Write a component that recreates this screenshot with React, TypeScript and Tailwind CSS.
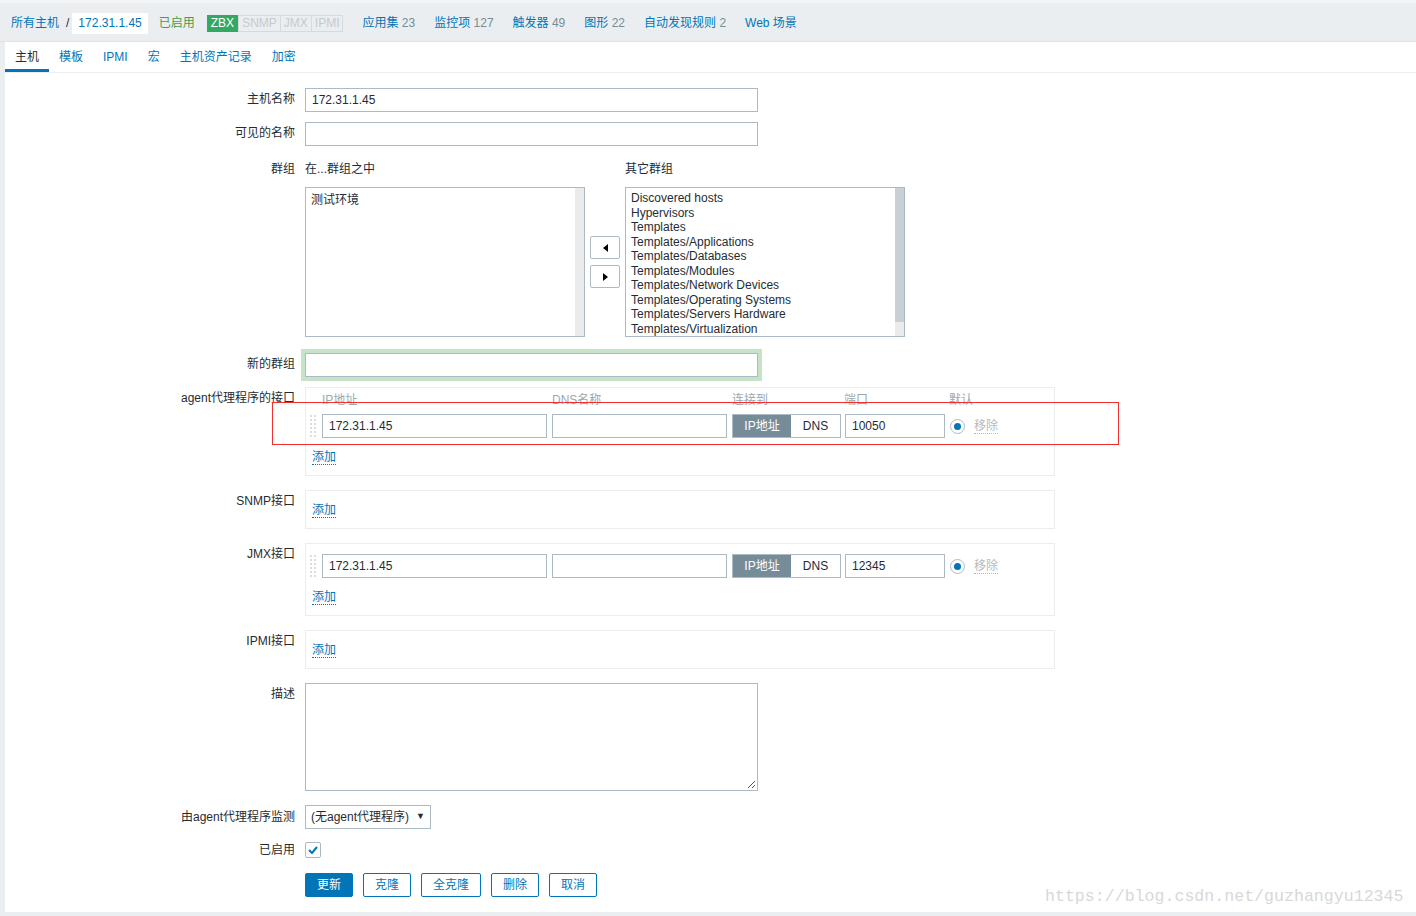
import React from 'react'

const groupsOther = [
  'Discovered hosts',
  'Hypervisors',
  'Templates',
  'Templates/Applications',
  'Templates/Databases',
  'Templates/Modules',
  'Templates/Network Devices',
  'Templates/Operating Systems',
  'Templates/Servers Hardware',
  'Templates/Virtualization',
]

const navItems = [
  { label: '应用集', n: '23' },
  { label: '监控项', n: '127' },
  { label: '触发器', n: '49' },
  { label: '图形', n: '22' },
  { label: '自动发现规则', n: '2' },
  { label: 'Web 场景', n: '' },
]

const Label = ({ children, lh = 'leading-[22px]' }: { children: React.ReactNode; lh?: string }) => (
  <div className={`w-[300px] shrink-0 pr-[10px] text-right text-[#1f2c33] ${lh}`}>{children}</div>
)

const Handle = () => (
  <div className="grid grid-cols-2 gap-x-[2px] gap-y-[2px] w-[6px] py-[4px]">
    {Array.from({ length: 12 }).map((_, i) => (
      <div key={i} className="w-[2px] h-[2px] bg-[#d9dee1]" />
    ))}
  </div>
)

const AddLink = () => (
  <div className="leading-[14px] h-[15px]">
    <span className="text-[#0275b8] border-b border-dotted border-[#0275b8]">添加</span>
  </div>
)

const InterfaceRow = ({ ip, port }: { ip: string; port: string }) => (
  <div className="flex items-center h-[24px]">
    <Handle />
    <div className="ml-[6px] w-[225px] h-[24px] border border-[#acbbc3] px-[6px] leading-[22px] text-[#1f2c33]">{ip}</div>
    <div className="ml-[5px] w-[175px] h-[24px] border border-[#acbbc3]" />
    <div className="ml-[5px] flex h-[24px] border border-[#acbbc3]">
      <div className="w-[58px] bg-[#768d99] text-white text-center leading-[22px]">IP地址</div>
      <div className="w-[49px] bg-white text-[#1f2c33] text-center leading-[22px]">DNS</div>
    </div>
    <div className="ml-[4px] w-[100px] h-[24px] border border-[#acbbc3] px-[6px] leading-[22px] text-[#1f2c33]">{port}</div>
    <div className="ml-[5px] w-[15px] h-[15px] rounded-full border border-[#acbbc3] flex items-center justify-center">
      <div className="w-[7px] h-[7px] rounded-full bg-[#0275b8]" />
    </div>
    <span className="ml-[9px] text-[#acbbc3] border-b border-dotted border-[#acbbc3] leading-[14px]">移除</span>
  </div>
)

const Btn = ({ children, primary, w }: { children: React.ReactNode; primary?: boolean; w: string }) => (
  <div
    className={`${w} h-[24px] rounded-[2px] border border-[#0275b8] text-center leading-[22px] ${
      primary ? 'bg-[#0275b8] text-white' : 'bg-white text-[#0275b8]'
    }`}
  >
    {children}
  </div>
)

export default function App() {
  return (
    <div className="relative w-[1416px] h-[916px] overflow-hidden bg-[#ebeef0] text-[12px] font-['Liberation_Sans','Noto_Sans_CJK_SC',sans-serif]">
      {/* breadcrumb bar */}
      <div className="h-[42px] border-t-[3px] border-[#f2f4f5] border-b border-b-[#dfe4e7] flex items-center pl-[11px] pt-[2px]">
        <span className="text-[#0275b8]">所有主机</span>
        <span className="ml-[7px] text-[#1f2c33]">/</span>
        <span className="ml-[3px] bg-white px-[6px] h-[21px] leading-[21px] text-[#0275b8]">172.31.1.45</span>
        <span className="ml-[11px] text-[#429e47]">已启用</span>
        <div className="ml-[12px] flex h-[17px] leading-[15px]">
          <span className="px-[3px] bg-[#34a862] text-white border border-[#34a862]">ZBX</span>
          <span className="px-[3px] text-[#c3cbd0] border border-[#d4dadd]">SNMP</span>
          <span className="px-[3px] text-[#c3cbd0] border border-l-0 border-[#d4dadd]">JMX</span>
          <span className="px-[3px] text-[#c3cbd0] border border-l-0 border-[#d4dadd]">IPMI</span>
        </div>
        <div className="ml-[19px] flex gap-[19px]">
          {navItems.map((it) => (
            <span key={it.label}>
              <span className="text-[#0275b8]">{it.label}</span>
              {it.n && <span className="text-[#768d99]"> {it.n}</span>}
            </span>
          ))}
        </div>
      </div>

      {/* main panel */}
      <div className="ml-[5px] bg-white h-[870px]">
        <div className="h-[31px] flex border-b border-[#ebeef0] pt-[2px]">
          <div className="px-[10px] leading-[26px] text-[#1f2c33] border-b-[3px] border-[#0275b8]">主机</div>
          <div className="px-[10px] leading-[26px] text-[#0275b8]">模板</div>
          <div className="px-[10px] leading-[26px] text-[#0275b8]">IPMI</div>
          <div className="px-[10px] leading-[26px] text-[#0275b8]">宏</div>
          <div className="px-[10px] leading-[26px] text-[#0275b8]">主机资产记录</div>
          <div className="px-[10px] leading-[26px] text-[#0275b8]">加密</div>
        </div>

        <div className="pt-[15px]">
          <div className="flex">
            <Label>主机名称</Label>
            <div className="w-[453px] h-[24px] border border-[#acbbc3] px-[6px] leading-[22px] text-[#1f2c33]">172.31.1.45</div>
          </div>
          <div className="flex mt-[10px]">
            <Label>可见的名称</Label>
            <div className="w-[453px] h-[24px] border border-[#acbbc3]" />
          </div>

          <div className="flex mt-[12px]">
            <Label>群组</Label>
            <div className="flex gap-[5px] text-[#1f2c33]">
              <div className="w-[280px]">
                <div className="leading-[22px]">在...群组之中</div>
                <div className="mt-[7px] h-[150px] border border-[#acbbc3] flex">
                  <div className="flex-1 px-[5px] pt-[5px] leading-[15px]">测试环境</div>
                  <div className="w-[9px] bg-[#ebebeb]" />
                </div>
              </div>
              <div className="w-[30px] pt-[78px] flex flex-col gap-[6px]">
                <div className="h-[23px] border border-[#acbbc3] rounded-[2px] flex items-center justify-center">
                  <div className="w-0 h-0 border-y-[4px] border-y-transparent border-r-[5px] border-r-black" />
                </div>
                <div className="h-[23px] border border-[#acbbc3] rounded-[2px] flex items-center justify-center">
                  <div className="w-0 h-0 border-y-[4px] border-y-transparent border-l-[5px] border-l-black" />
                </div>
              </div>
              <div className="w-[280px]">
                <div className="leading-[22px]">其它群组</div>
                <div className="mt-[7px] h-[150px] border border-[#acbbc3] flex overflow-hidden">
                  <div className="flex-1 px-[5px] pt-[3px] leading-[14.5px]">
                    {groupsOther.map((g) => (
                      <div key={g}>{g}</div>
                    ))}
                  </div>
                  <div className="w-[9px] bg-[#ebebeb] flex flex-col">
                    <div className="h-[134px] bg-[#c8d0d5]" />
                  </div>
                </div>
              </div>
            </div>
          </div>

          <div className="flex mt-[16px]">
            <Label>新的群组</Label>
            <div className="w-[453px] h-[24px] border border-[#acbbc3] shadow-[0_0_0_4px_#c6e3c8]" />
          </div>

          <div className="flex mt-[10px]">
            <Label>agent代理程序的接口</Label>
            <div className="w-[750px] border border-[#ebeef0] pl-[4px] pt-[5px] pb-[10px]">
              <div className="flex leading-[14px] text-[#9aa8b0]">
                <span className="ml-[12px] w-[230px]">IP地址</span>
                <span className="w-[180px]">DNS名称</span>
                <span className="w-[112px]">连接到</span>
                <span className="w-[105px]">端口</span>
                <span>默认</span>
              </div>
              <div className="mt-[7px]">
                <InterfaceRow ip="172.31.1.45" port="10050" />
              </div>
              <div className="mt-[12px] pl-[2px]">
                <AddLink />
              </div>
            </div>
          </div>

          <div className="flex mt-[14px]">
            <Label>SNMP接口</Label>
            <div className="w-[750px] border border-[#ebeef0] pl-[6px] pt-[12px] pb-[10px]">
              <AddLink />
            </div>
          </div>

          <div className="flex mt-[14px]">
            <Label>JMX接口</Label>
            <div className="w-[750px] border border-[#ebeef0] pl-[4px] pt-[10px] pb-[10px]">
              <InterfaceRow ip="172.31.1.45" port="12345" />
              <div className="mt-[12px] pl-[2px]">
                <AddLink />
              </div>
            </div>
          </div>

          <div className="flex mt-[14px]">
            <Label>IPMI接口</Label>
            <div className="w-[750px] border border-[#ebeef0] pl-[6px] pt-[12px] pb-[10px]">
              <AddLink />
            </div>
          </div>

          <div className="flex mt-[14px]">
            <Label>描述</Label>
            <div className="relative w-[453px] h-[108px] border border-[#acbbc3]">
              <svg className="absolute right-[1px] bottom-[1px]" width="9" height="9" viewBox="0 0 9 9">
                <path d="M8 1 L1 8 M8 5 L5 8" stroke="#555" strokeWidth="1" />
              </svg>
            </div>
          </div>

          <div className="flex mt-[14px]">
            <Label lh="leading-[24px]">由agent代理程序监测</Label>
            <div className="w-[126px] h-[24px] border border-[#acbbc3] flex items-center justify-between px-[5px] text-[#1f2c33]">
              <span>(无agent代理程序)</span>
              <span className="text-[9px]">▼</span>
            </div>
          </div>

          <div className="flex mt-[13px]">
            <Label lh="leading-[16px]">已启用</Label>
            <div className="w-[16px] h-[16px] border border-[#acbbc3] rounded-[2px] flex items-center justify-center">
              <svg width="10" height="8" viewBox="0 0 10 8">
                <path d="M1 4 L4 7 L9 1" stroke="#0275b8" strokeWidth="2" fill="none" />
              </svg>
            </div>
          </div>

          <div className="flex mt-[15px]">
            <div className="w-[300px] shrink-0" />
            <div className="flex gap-[10px]">
              <Btn primary w="w-[48px]">更新</Btn>
              <Btn w="w-[48px]">克隆</Btn>
              <Btn w="w-[60px]">全克隆</Btn>
              <Btn w="w-[48px]">删除</Btn>
              <Btn w="w-[48px]">取消</Btn>
            </div>
          </div>
        </div>
      </div>

      {/* annotation box */}
      <div className="absolute left-[272px] top-[402px] w-[847px] h-[43px] border border-[#f03030]" />

      {/* watermark */}
      <div className="absolute left-[1045px] top-[886px] text-[16.6px] leading-[22px] text-[#d8d8d8] font-['Liberation_Mono',monospace]">
        https://blog.csdn.net/guzhangyu12345
      </div>
    </div>
  )
}
